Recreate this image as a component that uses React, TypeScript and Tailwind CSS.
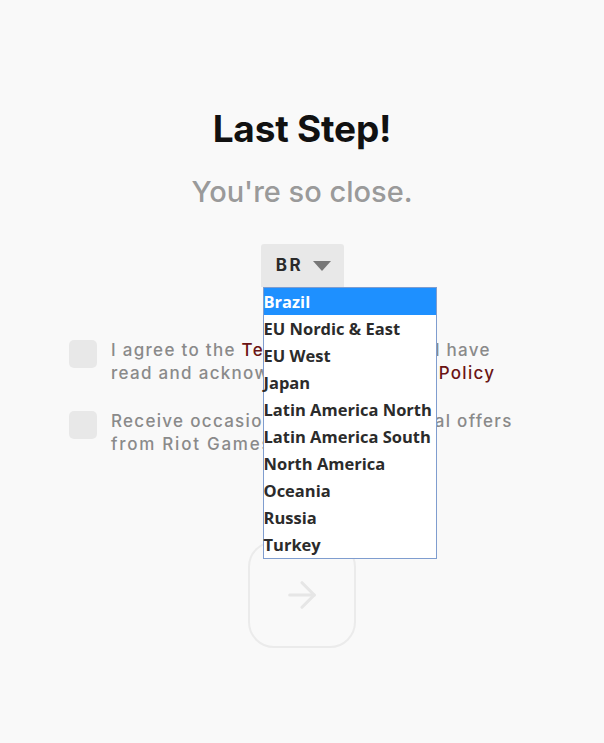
import { ArrowRight } from 'lucide-react';

const regions = [
  'Brazil',
  'EU Nordic & East',
  'EU West',
  'Japan',
  'Latin America North',
  'Latin America South',
  'North America',
  'Oceania',
  'Russia',
  'Turkey',
];

export default function App() {
  return (
    <div className="min-h-[743px] w-full bg-[#f9f9f9] font-['Inter',sans-serif] flex flex-col items-center pt-[106px]">
      <h1 className="text-[37px] leading-[46px] font-bold text-[#111] tracking-[-0.2px]">Last Step!</h1>
      <p className="mt-[22px] text-[29px] leading-[36px] font-medium text-[#9a9a9a]">You're so close.</p>

      {/* Region select */}
      <div className="relative mt-[34px]">
        <div className="w-[83px] h-[43px] bg-[#e8e8e8] rounded-t-[3px] flex items-center justify-center gap-[10px] pl-[3px]">
          <span className="text-[17px] font-bold text-[#2a2a2a] tracking-[2.5px]">BR</span>
          <svg width="18" height="10" viewBox="0 0 18 10">
            <path d="M0 0 H18 L9 10 Z" fill="#777" />
          </svg>
        </div>
        <ul className="absolute left-[2px] top-[43px] w-[174px] bg-white border border-[#7f9dcf] z-10 font-['Open_Sans',sans-serif]">
          {regions.map((r, i) => (
            <li
              key={r}
              className={`h-[27px] leading-[28px] text-[16.5px] font-bold ${i === 0 ? 'bg-[#1e90ff] text-white' : 'text-[#2b2b2b]'}`}
            >
              {r}
            </li>
          ))}
        </ul>
      </div>

      {/* Checkboxes */}
      <div className="mt-[52px] w-[466px] flex flex-col gap-[25px] text-[17px] leading-[23px] text-[#8a8a8a] font-medium tracking-[1.3px] whitespace-nowrap">
        <label className="flex items-start gap-[14px]">
          <span className="w-[28px] h-[28px] shrink-0 rounded-[5px] bg-[#e8e8e8] mt-[1px]" />
          <span>
            I agree to the <span className="text-[#6b1414]">Terms of Service</span> and have
            <br />
            read and acknowledge the <span className="text-[#6b1414]">Privacy Policy</span>
          </span>
        </label>
        <label className="flex items-start gap-[14px]">
          <span className="w-[28px] h-[28px] shrink-0 rounded-[5px] bg-[#e8e8e8] mt-[1px]" />
          <span>
            Receive occasional <span className="tracking-[0.8px]">news and spec</span>ial offers
            <br />
            <span className="tracking-[1.75px]">from Riot Games</span>
          </span>
        </label>
      </div>

      {/* Submit */}
      <button className="mt-[85px] w-[108px] h-[107px] rounded-[26px] border-2 border-[#ebebeb] flex items-center justify-center">
        <ArrowRight className="w-[42px] h-[42px] text-[#e6e6e6]" strokeWidth={1.8} />
      </button>
    </div>
  );
}
